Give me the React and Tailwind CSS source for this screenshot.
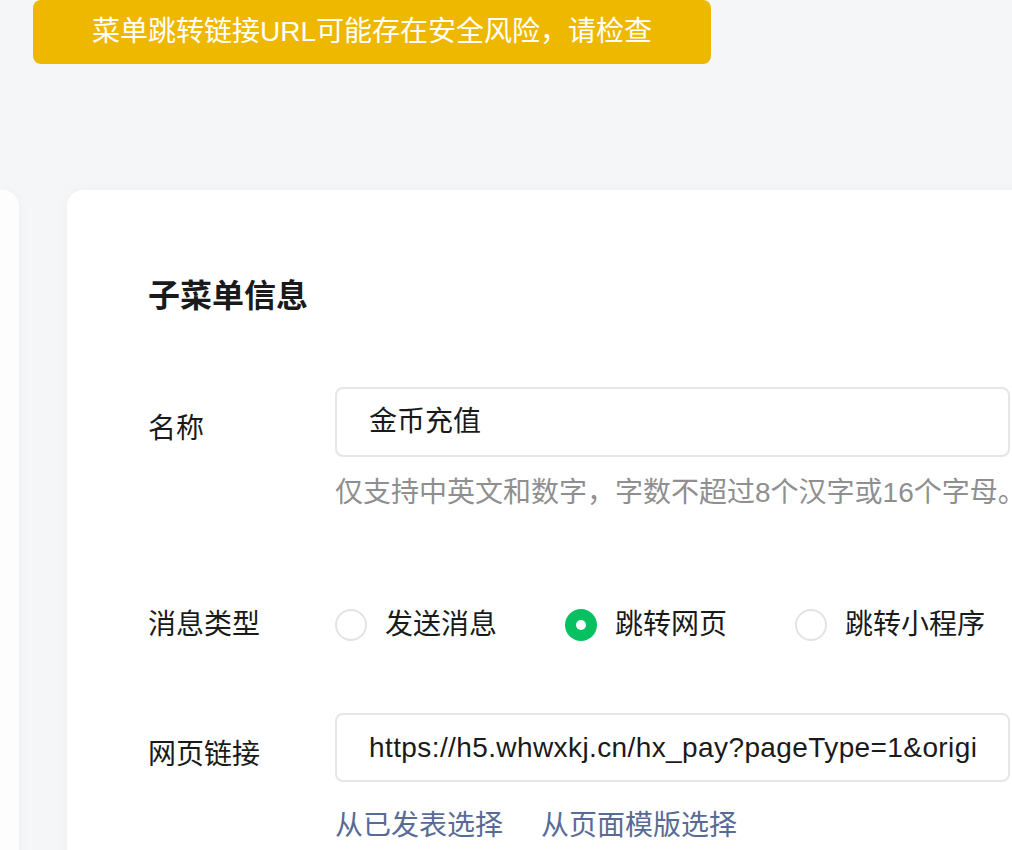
import React from "react";

function Radio({ checked, label }) {
  return (
    <div className="flex items-center gap-[18px]">
      {checked ? (
        <div className="w-[32px] h-[32px] rounded-full bg-[#07c160] flex items-center justify-center">
          <div className="w-[10px] h-[10px] rounded-full bg-white" />
        </div>
      ) : (
        <div className="w-[32px] h-[32px] rounded-full border-2 border-[#e3e3e3] bg-white" />
      )}
      <span className="leading-[40px]">{label}</span>
    </div>
  );
}

export default function App() {
  return (
    <div
      className="w-[1012px] h-[850px] overflow-hidden bg-[#f5f6f8] text-[28px] text-[#1a1a1a]"
      style={{ fontFamily: '"Liberation Sans", "Noto Sans CJK SC", sans-serif' }}
    >
      <div className="pl-[33px]">
        <div className="w-[678px] h-[64px] rounded-[8px] bg-[#efb800] text-white flex items-center justify-center leading-none">
          菜单跳转链接URL可能存在安全风险，请检查
        </div>
      </div>

      <div className="mt-[126px] flex gap-[48px] h-[700px]">
        <div className="w-[19px] shrink-0 bg-[#fdfdfd] rounded-tr-[16px] shadow-[0_0_12px_rgba(0,0,0,0.035)]" />
        <div className="flex-1 bg-white rounded-tl-[16px] shadow-[0_0_12px_rgba(0,0,0,0.035)] pl-[81px] pt-[84px]">
          <div className="text-[32px] font-bold leading-[44px] text-[#1a1a1a]">子菜单信息</div>

          <div className="mt-[69px] flex items-start">
            <div className="w-[187px] shrink-0 pt-[22px] leading-[40px]">名称</div>
            <div className="w-[675px] h-[70px] shrink-0 border-2 border-[#e6e6e6] rounded-[8px] px-[32px] flex items-center">
              <span className="leading-[40px]">金币充值</span>
            </div>
          </div>
          <div className="ml-[187px] mt-[16px] leading-[40px] text-[#8f8f8f] whitespace-nowrap">
            仅支持中英文和数字，字数不超过8个汉字或16个字母。
          </div>

          <div className="mt-[92px] flex items-center">
            <div className="w-[187px] shrink-0 leading-[40px]">消息类型</div>
            <div className="flex items-center gap-[68px] whitespace-nowrap">
              <Radio label="发送消息" />
              <Radio checked label="跳转网页" />
              <Radio label="跳转小程序" />
            </div>
          </div>

          <div className="mt-[68px] flex items-start">
            <div className="w-[187px] shrink-0 pt-[22px] leading-[40px]">网页链接</div>
            <div className="w-[675px] h-[69px] shrink-0 border-2 border-[#e6e6e6] rounded-[8px] pl-[32px] pr-[32px] flex items-center">
              <div className="overflow-hidden whitespace-nowrap leading-[40px] tracking-[0.4px]">
                https://h5.whwxkj.cn/hx_pay?pageType=1&amp;origin=menu&amp;channel=wx
              </div>
            </div>
          </div>
          <div className="ml-[187px] mt-[24px] leading-[40px] text-[#576b95] flex gap-[38px]">
            <span>从已发表选择</span>
            <span>从页面模版选择</span>
          </div>
        </div>
      </div>
    </div>
  );
}
